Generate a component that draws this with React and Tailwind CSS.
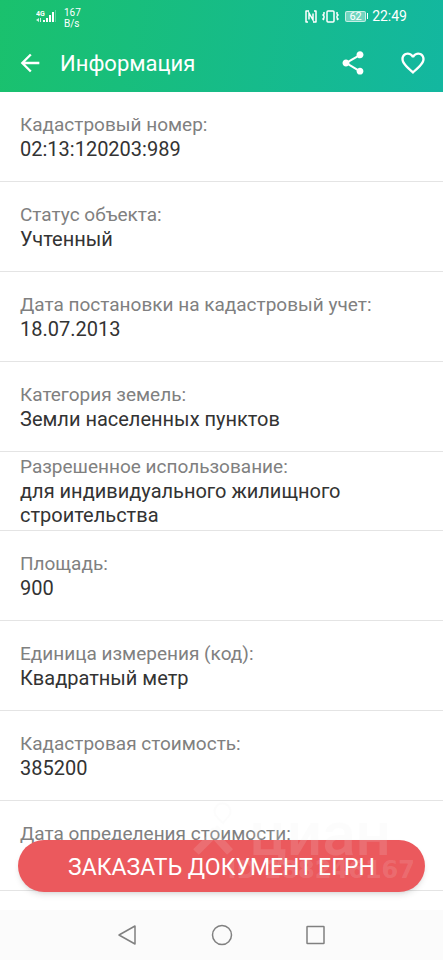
import React from 'react';
import { MdArrowBack, MdFavoriteBorder, MdShare } from 'react-icons/md';

const details = [
  { label: 'Кадастровый номер:', value: '02:13:120203:989' },
  { label: 'Статус объекта:', value: 'Учтенный' },
  { label: 'Дата постановки на кадастровый учет:', value: '18.07.2013' },
  { label: 'Категория земель:', value: 'Земли населенных пунктов' },
  { label: 'Разрешенное использование:', value: 'для индивидуального жилищного строительства', compact: true },
  { label: 'Площадь:', value: '900' },
  { label: 'Единица измерения (код):', value: 'Квадратный метр' },
  { label: 'Кадастровая стоимость:', value: '385200' },
  { label: 'Дата определения стоимости:', value: '' },
];

const StatusBar = () => (
  <div className="flex h-8 items-center justify-between px-9 text-white">
    <div className="flex items-center gap-2 pt-1">
      <svg className="h-4 w-5" viewBox="0 0 20 16" fill="currentColor">
        <text x="0" y="6" fontSize="7" fontWeight="700">4G</text>
        <path d="M0 10l3-2v4zM4 8h1v4H4z" opacity="0.8" />
        <path d="M7 10h2v2H7zM10 8h2v4h-2zM13 5h2v7h-2zM16 2h2v10h-2z" />
        <path d="M19 0h1v12h-1z" opacity="0.3" />
      </svg>
      <div className="text-[10px] leading-[11px]">
        <div>167</div>
        <div>B/s</div>
      </div>
    </div>
    <div className="flex items-center gap-1">
      <svg className="h-4 w-3" viewBox="0 0 12 16" fill="none" stroke="currentColor">
        <path d="M4 3H1v11h2M8 14h3V3H9" strokeWidth="1.5" strokeLinejoin="round" />
        <path d="M4 11.500V5l4 7V5.500" strokeWidth="1.5" />
      </svg>
      <svg className="h-4 w-5" viewBox="0 0 20 16" fill="none" stroke="currentColor">
        <rect x="6" y="3" width="7" height="11" rx="1" strokeWidth="1.5" />
        <path d="M3 4v2l-1 1 1 1v2l-1 1 1 1M16 4v2l1 1-1 1v2l1 1-1 1" strokeWidth="1.5" />
      </svg>
      <div className="flex items-center gap-px">
        <div className="flex h-[11px] w-[21px] items-center justify-center rounded-xs border border-white/60 bg-white/40 text-[11px] leading-none">62</div>
        <div className="h-1.5 w-px bg-white" />
      </div>
      <span className="text-sm">22:49</span>
    </div>
  </div>
);

const Header = () => (
  <header className="shrink-0 bg-linear-[100deg] from-[#1ac16d] to-[#13b7a0] pb-1">
    <StatusBar />
    <div className="flex h-14 items-center px-4 pt-1.5 text-white">
      <button type="button" aria-label="Назад">
        <MdArrowBack className="h-7 w-7" />
      </button>
      <h1 className="ml-4 flex-1 text-[22px]">Информация</h1>
      <button type="button" aria-label="Поделиться" className="mr-8">
        <MdShare className="h-7 w-7" />
      </button>
      <button type="button" aria-label="В избранное">
        <MdFavoriteBorder className="h-7 w-7" />
      </button>
    </div>
  </header>
);

const DetailRow = ({ label, value, compact }) => (
  <div
    className={`border-b border-[#e4e4e4] px-5 leading-6 ${
      compact ? 'py-[3px]' : 'min-h-[90px] pt-[21px] pb-5'
    }`}
  >
    <dt className="text-[19px] text-[#808080]">{label}</dt>
    <dd className="text-[20px] text-[#333333]">{value}</dd>
  </div>
);

const Watermark = () => (
  <div className="pointer-events-none absolute right-3 bottom-7 flex flex-col items-end pr-4 text-[#eeeeee]/15">
    <div className="flex items-end gap-3 pr-6">
      <svg className="h-14 w-12" viewBox="0 0 48 56" fill="none" stroke="currentColor">
        <path d="M26 14a8 8 0 1 1 13 0l-6 7z" strokeWidth="2" />
        <path d="M6 50l24-24M20 28l20 22" strokeWidth="8" />
      </svg>
      <span className="text-[62px] leading-12 font-medium">циан</span>
    </div>
    <span className="font-['DejaVu_Sans',sans-serif] text-2xl leading-6 font-bold">ID 288246167</span>
  </div>
);

const NavBar = () => (
  <nav className="flex h-[50px] shrink-0 items-center justify-center gap-[70px] bg-[#fbfbfb] text-[#808080]">
    <button type="button" aria-label="Назад">
      <svg className="h-6 w-6" viewBox="0 0 24 24" fill="none" stroke="currentColor" strokeWidth="1.5" strokeLinejoin="round">
        <path d="M19 3v18L3 12z" />
      </svg>
    </button>
    <button type="button" aria-label="Домой">
      <svg className="h-6 w-6" viewBox="0 0 24 24" fill="none" stroke="currentColor" strokeWidth="1.5">
        <circle cx="12" cy="12" r="9.5" />
      </svg>
    </button>
    <button type="button" aria-label="Недавние">
      <svg className="h-6 w-6" viewBox="0 0 24 24" fill="none" stroke="currentColor" strokeWidth="1.5" strokeLinejoin="round">
        <rect x="3" y="3.500" width="17" height="17" rx="0.5" />
      </svg>
    </button>
  </nav>
);

const App = () => {
  return (
    <div className="flex h-screen flex-col bg-white font-['Roboto','Noto_Sans',sans-serif]">
      <Header />
      <main className="relative min-h-0 flex-1 overflow-hidden">
        <dl>
          {details.map((item) => (
            <DetailRow key={item.label} {...item} />
          ))}
        </dl>
        <button
          type="button"
          className="absolute inset-x-[18px] bottom-[18px] h-[52px] rounded-full bg-[#eb595d] pt-1 text-[23px] text-white shadow-md"
        >
          ЗАКАЗАТЬ ДОКУМЕНТ ЕГРН
        </button>
        <Watermark />
      </main>
      <NavBar />
    </div>
  );
};

export default App;
